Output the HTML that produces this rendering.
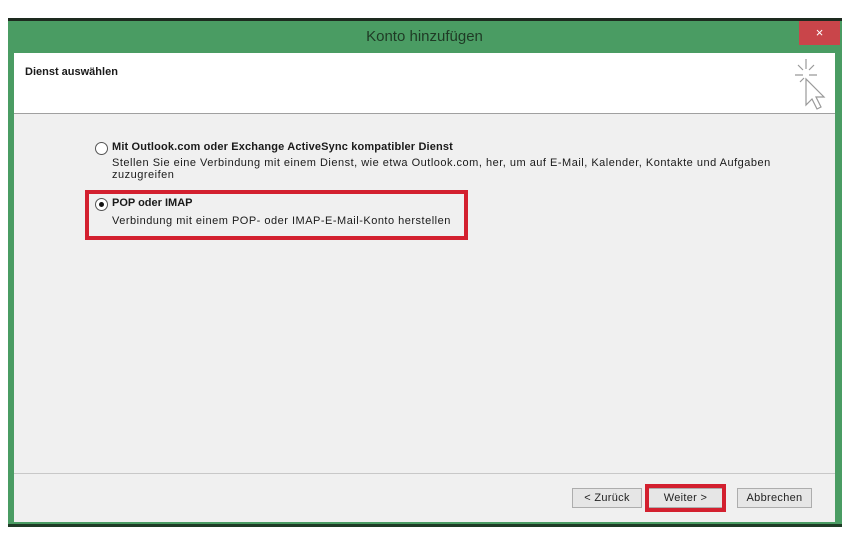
<!DOCTYPE html>
<html><head><meta charset="utf-8"><style>
body{margin:0;width:849px;height:542px;background:#fff;position:relative;overflow:hidden;font-family:"Liberation Sans",sans-serif;color:#1a1a1a}
.a{position:absolute}
.t{font-size:11px;white-space:nowrap}
.n{letter-spacing:0.5px}
.btn{position:absolute;top:488px;height:20px;background:#e6e6e6;border:1px solid #adadad;box-sizing:border-box;font-size:11px;text-align:center;line-height:18px;color:#222;letter-spacing:0.3px}
.radio{position:absolute;width:11px;height:11px;border:1px solid #555;border-radius:50%;background:#fff}
</style></head><body>
<div class="a" style="left:8px;top:18px;width:834px;height:3px;background:#1d2a1f"></div>
<div class="a" style="left:8px;top:21px;width:834px;height:503px;background:#4a9c63"></div>
<div class="a" style="left:8px;top:524px;width:834px;height:3px;background:#1f3b26"></div>
<div class="a" style="left:799px;top:21px;width:41px;height:24px;background:#c9454a;color:#fff;text-align:center;line-height:24px;font-size:13px">×</div>
<div class="a" style="left:0;top:28px;width:849px;text-align:center;font-size:15px;color:#1f3a25">Konto hinzufügen</div>
<div class="a" style="left:14px;top:53px;width:821px;height:60px;background:#fff"></div>
<div class="a t" style="left:25px;top:66px;font-weight:bold">Dienst auswählen</div>
<svg class="a" style="left:780px;top:55px" width="50" height="58" viewBox="0 0 50 58"><g stroke="#999" fill="none" stroke-width="1.2"><path d="M26 4v10M18 10l5 5M34 10l-5 5M15 20h8M29 20h8M20 27l4-4"/><path d="M26 24l0 26 6-6 5 10 4-2-5-10 8 0z" fill="#fff"/></g></svg>
<div class="a" style="left:14px;top:113px;width:821px;height:1px;background:#a0a0a0"></div>
<div class="a" style="left:14px;top:114px;width:821px;height:359px;background:#f0f0f0"></div>
<div class="a" style="left:14px;top:473px;width:821px;height:1px;background:#c8c8c8"></div>
<div class="a" style="left:14px;top:474px;width:821px;height:48px;background:#f0f0f0"></div>
<div class="radio" style="left:95px;top:142px"></div>
<div class="a t" style="left:112px;top:141px;font-weight:bold;letter-spacing:0.15px">Mit Outlook.com oder Exchange ActiveSync kompatibler Dienst</div>
<div class="a t n" style="left:112px;top:157px;line-height:12px">Stellen Sie eine Verbindung mit einem Dienst, wie etwa Outlook.com, her, um auf E-Mail, Kalender, Kontakte und Aufgaben<br>zuzugreifen</div>
<div class="radio" style="left:95px;top:198px"></div>
<div class="a" style="left:99px;top:202px;width:5px;height:5px;border-radius:50%;background:#111"></div>
<div class="a t" style="left:112px;top:197px;font-weight:bold">POP oder IMAP</div>
<div class="a t n" style="left:112px;top:215px">Verbindung mit einem POP- oder IMAP-E-Mail-Konto herstellen</div>
<div class="a" style="left:85px;top:190px;width:383px;height:50px;border:4px solid #d3202f;box-sizing:border-box"></div>
<div class="btn" style="left:572px;width:70px">&lt; Zurück</div>
<div class="btn" style="left:648px;width:75px">Weiter &gt;</div>
<div class="a" style="left:645px;top:484px;width:81px;height:28px;border:4px solid #d3202f;box-sizing:border-box"></div>
<div class="btn" style="left:737px;width:75px">Abbrechen</div>
</body></html>
